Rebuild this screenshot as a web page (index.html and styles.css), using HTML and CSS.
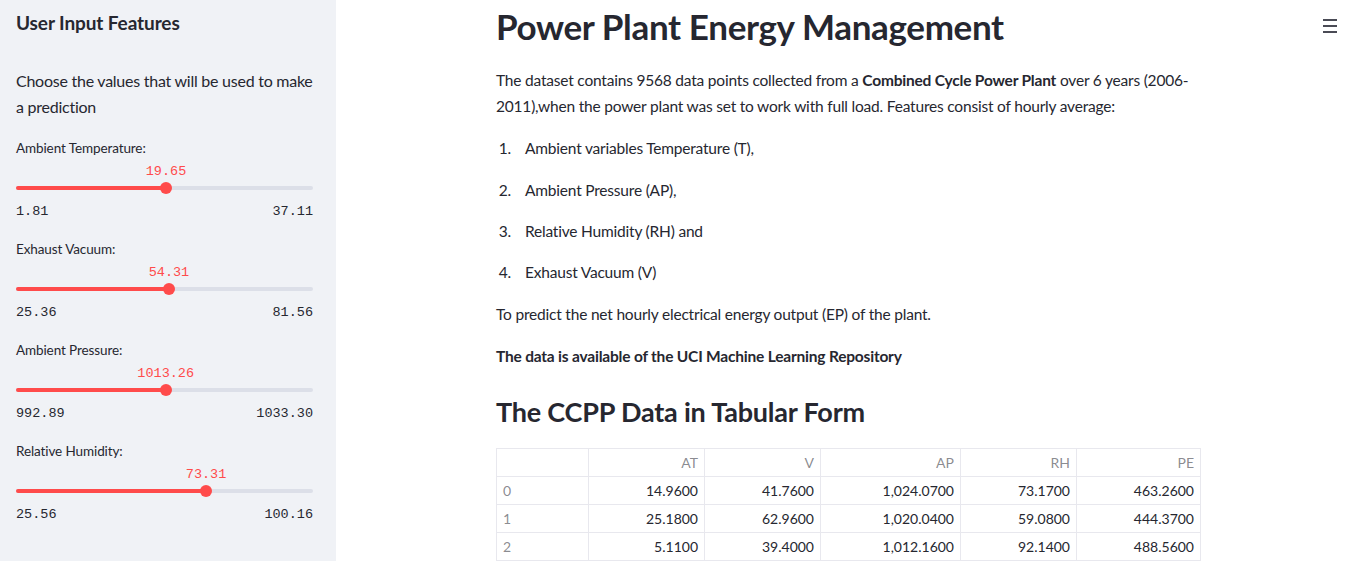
FILE: index.html
```html
<!DOCTYPE html>
<html lang="en">
<head>
<meta charset="utf-8">
<title>Power Plant Energy Management</title>
<link rel="stylesheet" href="styles.css">
</head>
<body>
<div class="app">
  <aside class="sidebar">
    <h2 class="side-title">User Input Features</h2>
    <p class="side-text">Choose the values that will be used to make a prediction</p>

    <div class="slider" style="--p:50.5%">
      <div class="s-label">Ambient Temperature:</div>
      <div class="s-value-row"><span class="s-value">19.65</span></div>
      <div class="s-track"><div class="s-fill"></div><div class="s-thumb"></div></div>
      <div class="s-ticks"><span>1.81</span><span>37.11</span></div>
    </div>

    <div class="slider" style="--p:51.5%">
      <div class="s-label">Exhaust Vacuum:</div>
      <div class="s-value-row"><span class="s-value">54.31</span></div>
      <div class="s-track"><div class="s-fill"></div><div class="s-thumb"></div></div>
      <div class="s-ticks"><span>25.36</span><span>81.56</span></div>
    </div>

    <div class="slider" style="--p:50.4%">
      <div class="s-label">Ambient Pressure:</div>
      <div class="s-value-row"><span class="s-value">1013.26</span></div>
      <div class="s-track"><div class="s-fill"></div><div class="s-thumb"></div></div>
      <div class="s-ticks"><span>992.89</span><span>1033.30</span></div>
    </div>

    <div class="slider" style="--p:64%">
      <div class="s-label">Relative Humidity:</div>
      <div class="s-value-row"><span class="s-value">73.31</span></div>
      <div class="s-track"><div class="s-fill"></div><div class="s-thumb"></div></div>
      <div class="s-ticks"><span>25.56</span><span>100.16</span></div>
    </div>
  </aside>

  <main class="main">
    <div class="menu-btn" aria-label="menu">
      <span></span><span></span><span></span>
    </div>
    <div class="block">
      <h1 class="title">Power Plant Energy Management</h1>
      <p class="para">The dataset contains 9568 data points collected from a <strong>Combined Cycle Power Plant</strong> over 6 years (2006-2011),when the power plant was set to work with full load. Features consist of hourly average:</p>
      <ol class="list">
        <li>Ambient variables Temperature (T),</li>
        <li>Ambient Pressure (AP),</li>
        <li>Relative Humidity (RH) and</li>
        <li>Exhaust Vacuum (V)</li>
      </ol>
      <p class="para">To predict the net hourly electrical energy output (EP) of the plant.</p>
      <p class="para"><strong>The data is available of the UCI Machine Learning Repository</strong></p>
      <h2 class="subtitle">The CCPP Data in Tabular Form</h2>
      <table class="data">
        <thead>
          <tr><th class="idx"></th><th class="c1">AT</th><th class="c2">V</th><th class="c3">AP</th><th class="c4">RH</th><th class="c5">PE</th></tr>
        </thead>
        <tbody>
          <tr><td class="idx">0</td><td>14.9600</td><td>41.7600</td><td>1,024.0700</td><td>73.1700</td><td>463.2600</td></tr>
          <tr><td class="idx">1</td><td>25.1800</td><td>62.9600</td><td>1,020.0400</td><td>59.0800</td><td>444.3700</td></tr>
          <tr><td class="idx">2</td><td>5.1100</td><td>39.4000</td><td>1,012.1600</td><td>92.1400</td><td>488.5600</td></tr>
        </tbody>
      </table>
    </div>
  </main>
</div>
</body>
</html>
```

FILE: styles.css
```css
* { box-sizing: border-box; }

html, body {
  margin: 0;
  padding: 0;
  height: 100%;
  overflow: hidden;
}

body {
  font-family: "Lato", "Liberation Sans", sans-serif;
  color: #262730;
  background: #ffffff;
}

.app {
  display: flex;
  height: 561px;
}

.sidebar {
  width: 336px;
  flex: none;
  background: #f0f2f6;
  padding: 8px 23px 0 16px;
}

.side-title {
  margin: 0;
  font-size: 19px;
  line-height: 30px;
  font-weight: 700;
  letter-spacing: -0.1px;
}

.side-text {
  margin: 30px 0 18px;
  font-size: 16px;
  line-height: 26px;
  letter-spacing: -0.25px;
}

.slider {
  margin-bottom: 17px;
}

.s-label {
  font-size: 13.5px;
  line-height: 20px;
  letter-spacing: -0.1px;
}

.s-value-row {
  position: relative;
  height: 20px;
  margin-top: 4px;
}

.s-value {
  position: absolute;
  left: var(--p);
  transform: translateX(-50%);
  font-family: "Liberation Mono", monospace;
  font-size: 13.5px;
  line-height: 20px;
  color: #ff4b4b;
}

.s-track {
  position: relative;
  height: 12px;
}

.s-track::before {
  content: "";
  position: absolute;
  left: 0;
  right: 0;
  top: 4px;
  height: 4px;
  border-radius: 2px;
  background: #dcdfe8;
}

.s-fill {
  position: absolute;
  left: 0;
  top: 4px;
  height: 4px;
  width: var(--p);
  border-radius: 2px;
  background: #ff4b4b;
}

.s-thumb {
  position: absolute;
  left: var(--p);
  top: 0;
  width: 12px;
  height: 12px;
  margin-left: -6px;
  border-radius: 50%;
  background: #ff4b4b;
}

.s-ticks {
  display: flex;
  justify-content: space-between;
  margin-top: 8px;
  font-family: "Liberation Mono", monospace;
  font-size: 13.5px;
  line-height: 20px;
  color: #262730;
}

.main {
  position: relative;
  flex: 1;
  padding-left: 160px;
}

.menu-btn {
  position: absolute;
  top: 19px;
  right: 16px;
  width: 14px;
  display: flex;
  flex-direction: column;
  gap: 4px;
}

.menu-btn span {
  display: block;
  height: 2px;
  background: #4a4b55;
}

.block {
  width: 704px;
}

.title {
  margin: 0;
  padding-top: 4px;
  font-size: 35px;
  line-height: 44px;
  font-weight: 700;
  letter-spacing: -0.35px;
}

.para {
  margin: 20px 0 0;
  font-size: 15.5px;
  line-height: 25.6px;
  letter-spacing: -0.2px;
}

.para strong { font-weight: 700; }

.list {
  margin: 17px 0 0;
  padding: 0;
  list-style: none;
  counter-reset: item;
  font-size: 15.5px;
  line-height: 25.6px;
  letter-spacing: -0.2px;
}

.list li {
  display: flex;
  counter-increment: item;
  margin-bottom: 15.8px;
}

.list li::before {
  content: counter(item) ".";
  width: 15px;
  margin-right: 14px;
  text-align: right;
  flex: none;
}

.list + .para { margin-top: 0; }

.para + .para { margin-top: 16.5px; }

.subtitle {
  margin: 26px 0 0;
  font-size: 27px;
  line-height: 34px;
  font-weight: 700;
  letter-spacing: -0.2px;
}

.data {
  margin-top: 19px;
  width: 704px;
  border-collapse: collapse;
  font-size: 14px;
  table-layout: fixed;
}

.data th, .data td {
  border: 1px solid #e8e8ee;
  height: 28px;
  padding: 0 6px;
  text-align: right;
  font-weight: 400;
  white-space: nowrap;
}

.data th {
  color: rgba(38, 39, 48, 0.55);
}

.data .idx {
  width: 92px;
  text-align: left;
  color: rgba(38, 39, 48, 0.55);
}

.data .c1 { width: 116px; }
.data .c2 { width: 116px; }
.data .c3 { width: 140px; }
.data .c4 { width: 116px; }
.data .c5 { width: 124px; }
```
